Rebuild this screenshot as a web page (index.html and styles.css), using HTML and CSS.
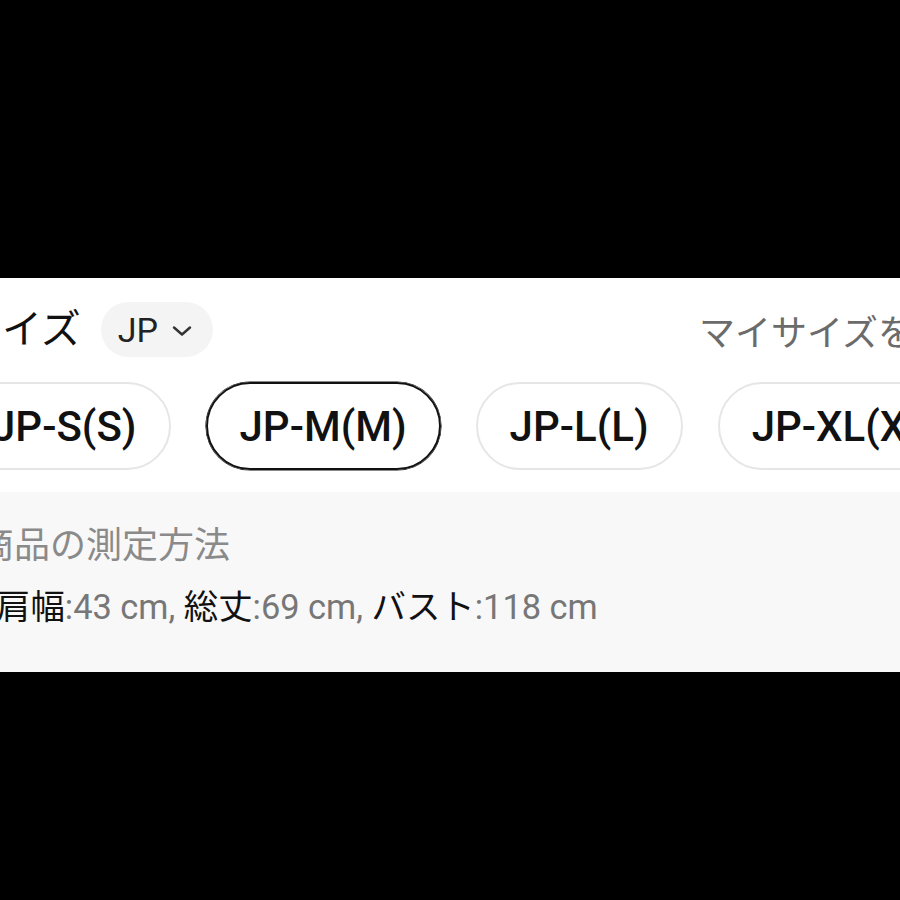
FILE: index.html
```html
<!DOCTYPE html>
<html lang="ja">
<head>
<meta charset="utf-8">
<link rel="stylesheet" href="styles.css">
</head>
<body>
<div class="panel">
  <div class="top">
    <div class="header">
      <span class="title">サイズ</span>
      <span class="chip">JP<svg class="chev" viewBox="0 0 20 10" width="20" height="10"><path d="M2 1.5 L10 8.5 L18 1.5" fill="none" stroke="#333" stroke-width="2.4" stroke-linecap="round" stroke-linejoin="round"/></svg></span>
      <span class="mysize">マイサイズを登録</span>
    </div>
    <div class="sizes">
      <span class="size">JP-S(S)</span>
      <span class="size selected">JP-M(M)</span>
      <span class="size">JP-L(L)</span>
      <span class="size">JP-XL(XL)</span>
    </div>
  </div>
  <div class="info">
    <div class="method">商品の測定方法</div>
    <div class="measure"><span class="lbl">肩幅</span><span class="val">:43 cm, </span><span class="lbl">総丈</span><span class="val">:69 cm, </span><span class="lbl">バスト</span><span class="val">:118 cm</span></div>
  </div>
</div>
</body>
</html>
```

FILE: styles.css
```css
html, body {
  margin: 0;
  padding: 0;
  background: #000;
}
body {
  width: 900px;
  height: 900px;
  overflow: hidden;
  font-family: Roboto, "Noto Sans CJK JP", sans-serif;
}
.panel {
  margin-top: 278px;
  width: 900px;
  overflow: hidden;
  background: #fff;
}
.top {
  padding: 24px 0 22px 0;
}
.header {
  display: flex;
  align-items: center;
  height: 55px;
  white-space: nowrap;
}
.title {
  margin-left: -38px;
  font-size: 40px;
  color: #111;
  line-height: 55px;
}
.chip {
  margin-left: 20px;
  display: flex;
  align-items: center;
  height: 55px;
  padding: 0 21px 0 17px;
  border-radius: 28px;
  background: #f4f4f4;
  font-size: 34px;
  color: #222;
}
.chev {
  margin-left: 14px;
  margin-top: 2px;
}
.mysize {
  margin-left: auto;
  margin-right: -86px;
  font-size: 36px;
  color: #6b6b6b;
}
.sizes {
  display: flex;
  gap: 35px;
  margin-top: 25px;
  margin-left: -42px;
  white-space: nowrap;
}
.size {
  flex: none;
  box-sizing: border-box;
  height: 88px;
  padding: 0 32px;
  border: 2px solid #e6e6e6;
  border-radius: 44px;
  display: flex;
  align-items: center;
  font-size: 42px;
  font-weight: 500;
  color: #111;
}
.size.selected {
  border-color: #111;
  box-shadow: 0 0 0 0.6px #111;
}
.info {
  background: #f8f8f8;
  height: 180px;
  box-sizing: border-box;
  padding-top: 24px;
  line-height: 61px;
  white-space: nowrap;
}
.method {
  margin-left: -22px;
  font-size: 36px;
  color: #8a8a8a;
}
.measure {
  margin-left: -4px;
  font-size: 34.4px;
}
.lbl {
  color: #111;
}
.val {
  color: #777;
}
```
